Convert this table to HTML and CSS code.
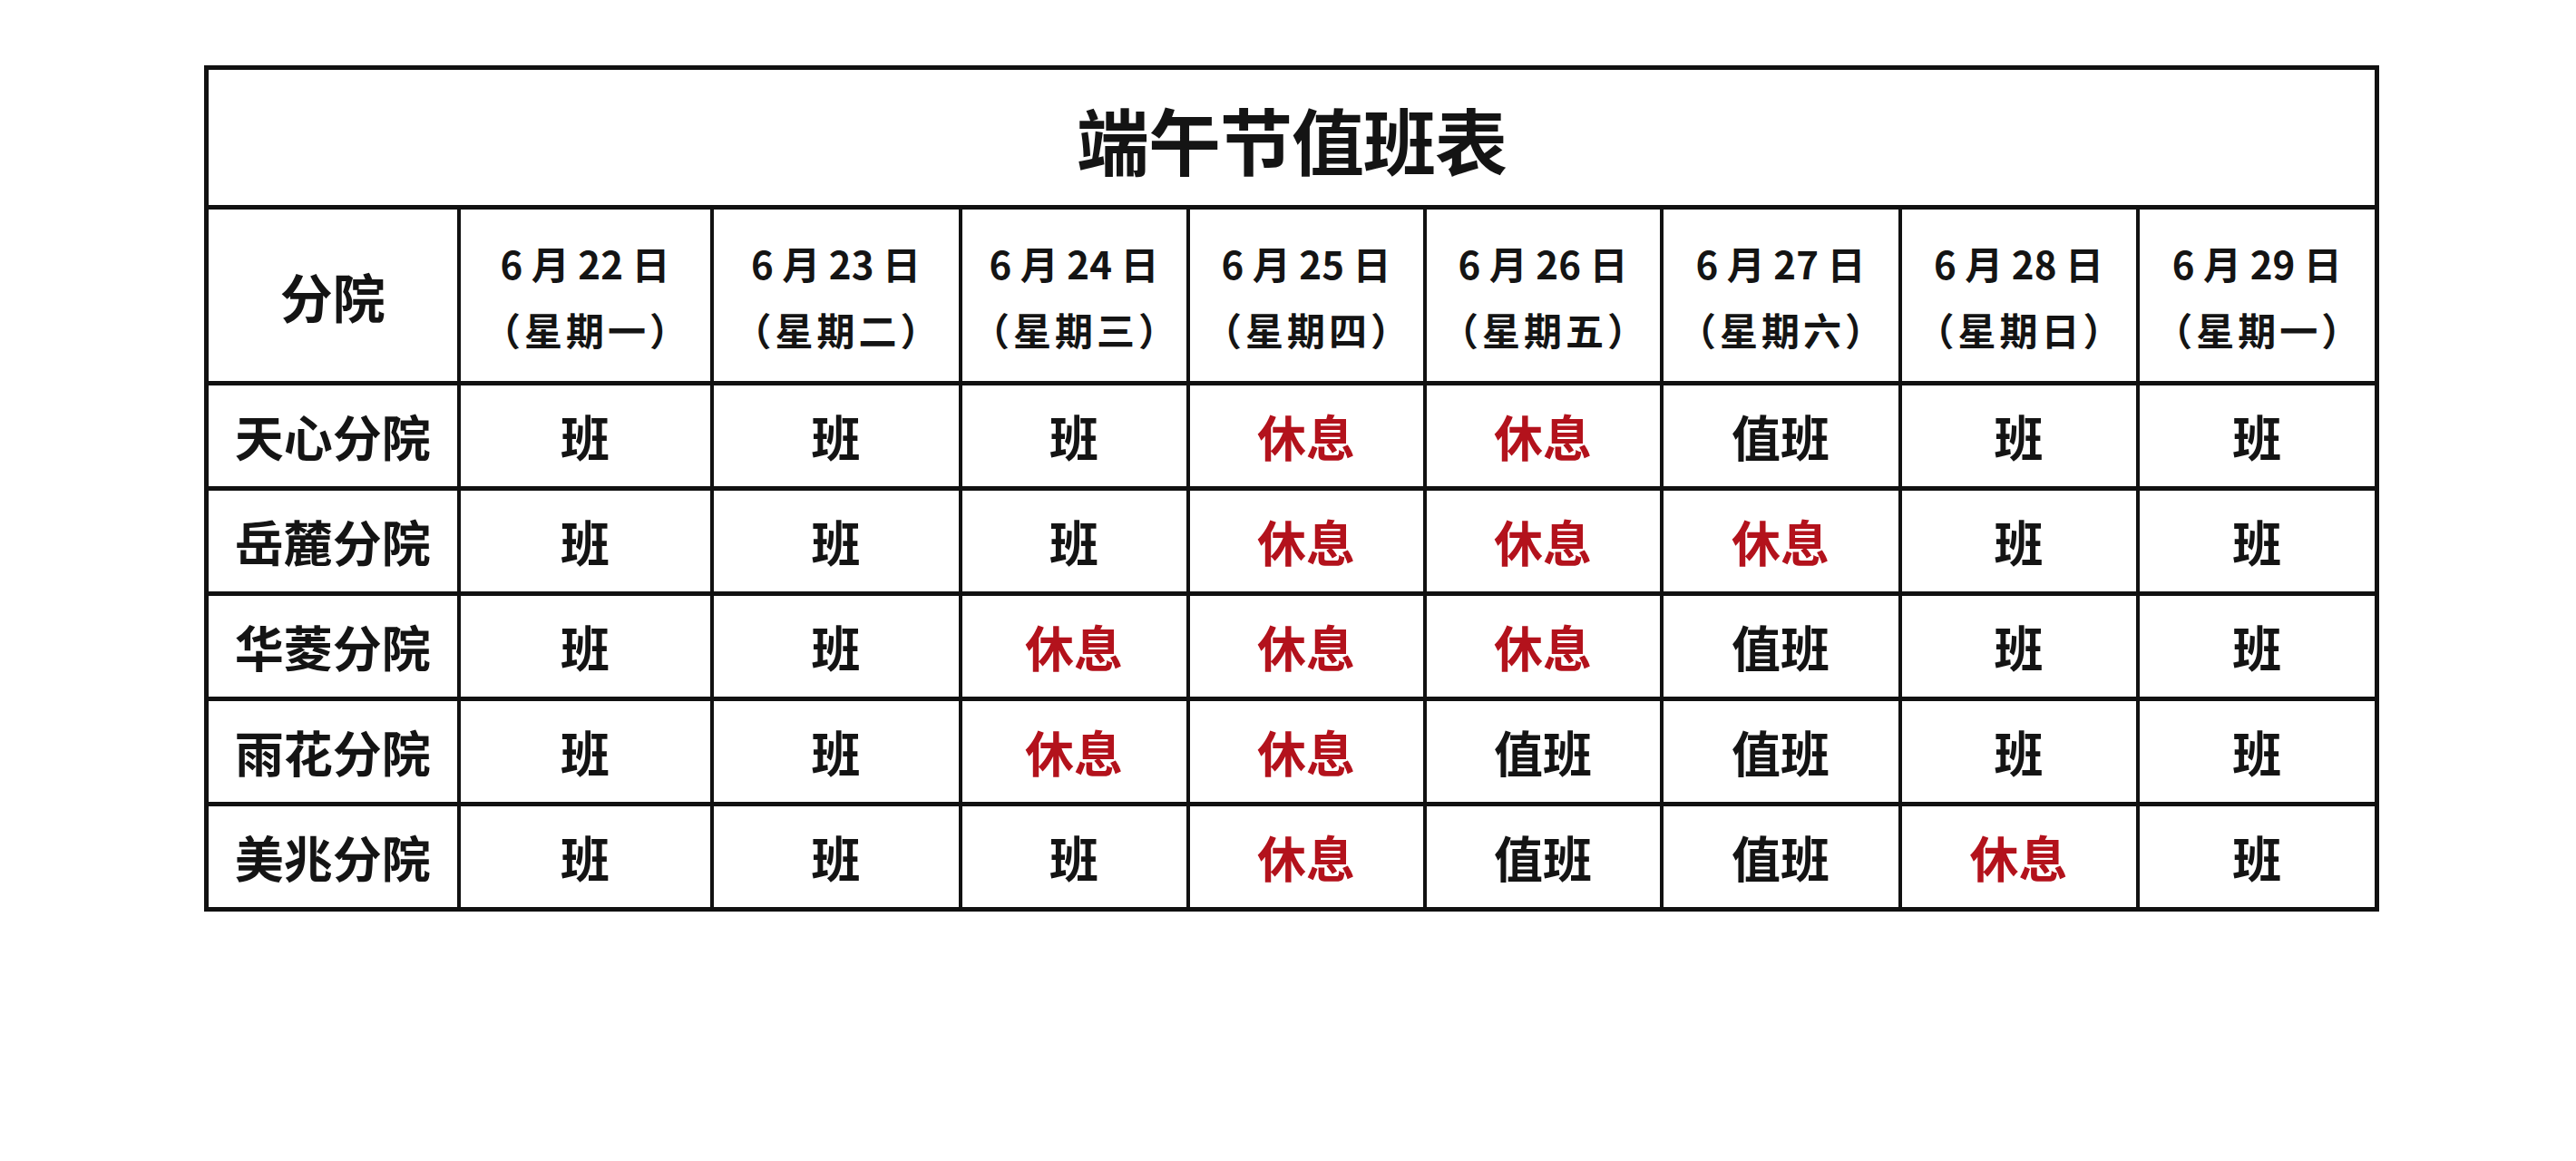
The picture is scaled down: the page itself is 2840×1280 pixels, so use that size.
FILE: index.html
```html
<!DOCTYPE html>
<html lang="zh-CN">
<head>
<meta charset="utf-8">
<title>端午节值班表</title>
<link rel="stylesheet" href="styles.css">
</head>
<body>
<main class="page">
  <table class="duty">
    <colgroup>
      <col class="c-branch">
      <col class="c22"><col class="c23"><col class="c24"><col class="c25">
      <col class="c26"><col class="c27"><col class="c28"><col class="c29">
    </colgroup>
    <thead>
      <tr class="title-row"><th colspan="9" class="title">端午节值班表</th></tr>
      <tr class="head-row">
        <th class="branch-head">分院</th>
        <th><span class="date">6 月 22 日</span><span class="week">（星期一）</span></th>
        <th><span class="date">6 月 23 日</span><span class="week">（星期二）</span></th>
        <th><span class="date">6 月 24 日</span><span class="week">（星期三）</span></th>
        <th><span class="date">6 月 25 日</span><span class="week">（星期四）</span></th>
        <th><span class="date">6 月 26 日</span><span class="week">（星期五）</span></th>
        <th><span class="date">6 月 27 日</span><span class="week">（星期六）</span></th>
        <th><span class="date">6 月 28 日</span><span class="week">（星期日）</span></th>
        <th><span class="date">6 月 29 日</span><span class="week">（星期一）</span></th>
      </tr>
    </thead>
    <tbody>
      <tr>
        <th class="branch">天心分院</th>
        <td>班</td><td>班</td><td>班</td><td class="rest">休息</td><td class="rest">休息</td><td>值班</td><td>班</td><td>班</td>
      </tr>
      <tr>
        <th class="branch">岳麓分院</th>
        <td>班</td><td>班</td><td>班</td><td class="rest">休息</td><td class="rest">休息</td><td class="rest">休息</td><td>班</td><td>班</td>
      </tr>
      <tr>
        <th class="branch">华菱分院</th>
        <td>班</td><td>班</td><td class="rest">休息</td><td class="rest">休息</td><td class="rest">休息</td><td>值班</td><td>班</td><td>班</td>
      </tr>
      <tr>
        <th class="branch">雨花分院</th>
        <td>班</td><td>班</td><td class="rest">休息</td><td class="rest">休息</td><td>值班</td><td>值班</td><td>班</td><td>班</td>
      </tr>
      <tr>
        <th class="branch">美兆分院</th>
        <td>班</td><td>班</td><td>班</td><td class="rest">休息</td><td>值班</td><td>值班</td><td class="rest">休息</td><td>班</td>
      </tr>
    </tbody>
  </table>
</main>
</body>
</html>
```
FILE: styles.css
```css
html, body {
  margin: 0;
  padding: 0;
  background: #ffffff;
}

body {
  font-family: "Noto Sans CJK SC", "Noto Sans", sans-serif;
  color: #141414;
}

.page {
  padding: 72px 0 0 225px;
}

.duty {
  border-collapse: collapse;
  table-layout: fixed;
  width: 2393px;
  border: 5px solid #111;
}

.c-branch { width: 278px; }
.c22 { width: 279px; }
.c23 { width: 274px; }
.c24 { width: 251px; }
.c25 { width: 261px; }
.c26 { width: 261px; }
.c27 { width: 263px; }
.c28 { width: 262px; }
.c29 { width: 264px; }

.duty th,
.duty td {
  border-top: 5px solid #111;
  border-bottom: 5px solid #111;
  border-left: 4px solid #111;
  border-right: 4px solid #111;
  padding: 0;
  text-align: center;
  vertical-align: middle;
  font-weight: 700;
}

.title-row { height: 154px; }

.title {
  font-size: 80px;
  line-height: 1;
  letter-spacing: -1px;
  padding-top: 14px;
}

.head-row { height: 194px; }

.head-row th {
  font-size: 42px;
}

.head-row .date,
.head-row .week {
  display: block;
  line-height: 73px;
}

.head-row .week {
  letter-spacing: 4px;
  text-indent: 4px;
}

.head-row .branch-head {
  font-size: 58px;
  letter-spacing: 0;
}

.duty tbody tr { height: 116px; }

.duty tbody td {
  font-size: 54px;
  line-height: 1;
  color: #141414;
}

.duty tbody .branch {
  font-size: 54px;
  line-height: 1;
}

.duty tbody td.rest {
  color: #b3121c;
}
```
